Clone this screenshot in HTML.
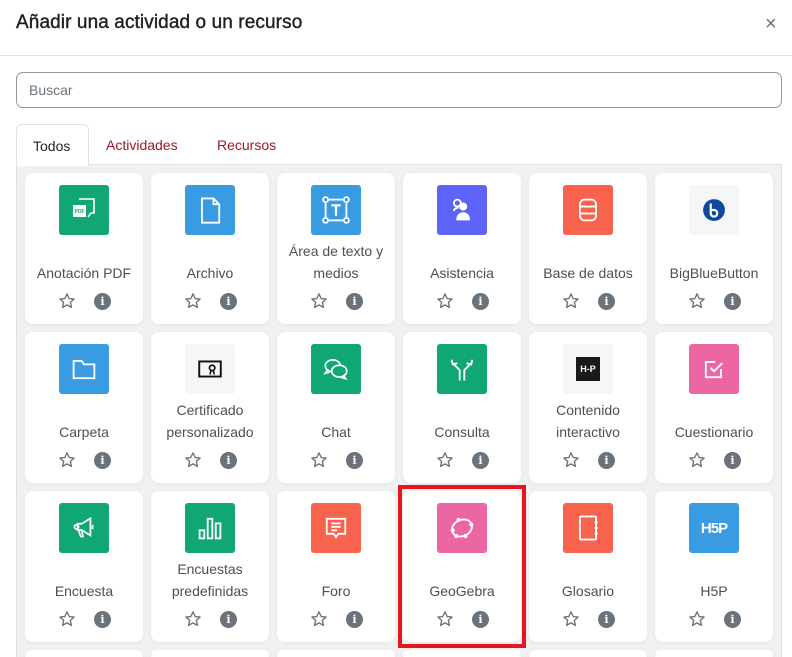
<!DOCTYPE html>
<html><head><meta charset="utf-8"><style>
*{box-sizing:border-box;margin:0;padding:0}
html,body{width:792px;height:657px;overflow:hidden}
body{background:#fff;font-family:"Liberation Sans",sans-serif;color:#495057;position:relative}
.hdr{height:56px;border-bottom:1px solid #dee2e6;position:relative}
.hdr h1{position:absolute;left:16px;top:12px;font-size:19px;font-weight:normal;color:#1d2125;letter-spacing:0.1px;-webkit-text-stroke:0.4px #1d2125}
.x{position:absolute;left:765px;top:13px;font-size:20px;color:#6a737b}
.search{position:absolute;left:16px;top:72px;width:766px;height:36px;border:1px solid #8f959e;border-radius:7px;padding:9px 12px;font-size:14px;color:#6a737b}
.tab{position:absolute;top:137px;font-size:14px;color:#a0172c}
.t0{position:absolute;left:16px;top:124px;width:73px;height:42px;border:1px solid #dee2e6;border-bottom:none;border-radius:6px 6px 0 0;background:#fff;color:#1d2125;font-size:14px;padding:13px 0 0 16px;z-index:2}
.area{position:absolute;left:16px;top:164px;width:766px;height:500px;background:#f0f1f3;border:1px solid #dee2e6}
.c{position:absolute;width:118px;height:151px;background:#fff;border-radius:8px;box-shadow:0 1px 4px rgba(0,0,0,.06);text-align:center}
.ic{position:absolute;left:34px;top:12px;width:50px;height:50px;border-radius:3px;display:flex;align-items:center;justify-content:center}
.lb{position:absolute;left:0;right:0;top:66px;height:45px;display:flex;align-items:flex-end;justify-content:center;font-size:14px;line-height:22px;color:#495057}
.st{position:absolute;left:33px;top:119px}
.inf{position:absolute;left:69px;top:120px;width:17px;height:17px;border-radius:50%;background:#6a737b;color:#fff;font-size:11px;font-weight:bold;line-height:17px;text-align:center;font-family:"DejaVu Serif",serif}
.g{background:#11a676}.b{background:#399be2}.p{background:#5d63f6}.o{background:#f7634d}.k{background:#eb66a2}.w{background:#f5f6f8}
.red{position:absolute;left:398px;top:485px;width:128px;height:163px;border:4px solid #e8141e;z-index:5}
</style></head><body>
<div class="hdr"><h1>Añadir una actividad o un recurso</h1><div class="x">×</div></div>
<div class="search">Buscar</div>
<div class="t0">Todos</div>
<div class="tab" style="left:106px">Actividades</div>
<div class="tab" style="left:217px">Recursos</div>
<div class="area"></div>
<div id="g"></div>
<div class="red"></div>
<script>
const S='<svg class="st" width="18" height="18" viewBox="0 0 24 24"><path d="M12 2.5l2.9 6.2 6.6.7-5 4.5 1.4 6.6L12 17.2l-5.9 3.3 1.4-6.6-5-4.5 6.6-.7z" fill="none" stroke="#6a737b" stroke-width="1.8" stroke-linejoin="round"/></svg><div class="inf">i</div>';
const W='fill="none" stroke="#fff" stroke-width="1.6"';
const I={
pdf:`<svg width="30" height="30" viewBox="0 0 30 30"><path d="M10 4h15v14h-3l-3 4" ${W}/><rect x="4" y="10" width="13" height="12" fill="#fff"/><text x="10.5" y="18" font-size="5" fill="#11a676" text-anchor="middle" font-weight="bold" font-family="Liberation Sans">PDF</text></svg>`,
file:`<svg width="30" height="30" viewBox="0 0 26 26"><path d="M6 3h10l5 5v16H6z M16 3v5h5" ${W}/></svg>`,
text:`<svg width="30" height="30" viewBox="0 0 26 26"><rect x="4" y="4" width="18" height="18" ${W}/><circle cx="4" cy="4" r="2.2" fill="#399be2" stroke="#fff" stroke-width="1.5"/><circle cx="22" cy="4" r="2.2" fill="#399be2" stroke="#fff" stroke-width="1.5"/><circle cx="4" cy="22" r="2.2" fill="#399be2" stroke="#fff" stroke-width="1.5"/><circle cx="22" cy="22" r="2.2" fill="#399be2" stroke="#fff" stroke-width="1.5"/><path d="M9 9h8M13 9v9" stroke="#fff" stroke-width="2"/></svg>`,
att:`<svg width="30" height="30" viewBox="0 0 26 26"><circle cx="9" cy="7" r="3" ${W}/><circle cx="14" cy="10" r="3.5" fill="#fff"/><path d="M8 22c0-5 3-7 6-7s6 2 6 7z" fill="#fff"/><path d="M6 14c0-2 2-3 4-3" ${W}/></svg>`,
db:`<svg width="30" height="30" viewBox="0 0 26 26"><rect x="6" y="4" width="14" height="18" rx="4" ${W}/><path d="M6 10h14M6 16h14" ${W}/></svg>`,
bbb:`<svg width="24" height="24" viewBox="0 0 22 22"><circle cx="11" cy="11" r="10" fill="#0d4a9c"/><path d="M8 5v9a3 3 0 1 0 3-3H8" fill="none" stroke="#fff" stroke-width="2"/></svg>`,
folder:`<svg width="30" height="30" viewBox="0 0 26 26"><path d="M4 6h7l2 3h9v12H4z" ${W}/></svg>`,
cert:`<svg width="28" height="28" viewBox="0 0 26 26"><rect x="3" y="6" width="20" height="14" fill="none" stroke="#111" stroke-width="1.8"/><circle cx="15" cy="12" r="2.5" fill="none" stroke="#111" stroke-width="1.6"/><path d="M14 14l-1 4M16 14l1 4" stroke="#111" stroke-width="1.5"/></svg>`,
chat:`<svg width="30" height="30" viewBox="0 0 28 28"><ellipse cx="11" cy="11" rx="7" ry="5.5" ${W}/><ellipse cx="17" cy="16" rx="7" ry="5.5" fill="#11a676" stroke="#fff" stroke-width="1.6"/><path d="M6 15l-2 3 4-1M21 20l2 3-4-1" ${W}/></svg>`,
choice:`<svg width="30" height="30" viewBox="0 0 26 26"><path d="M11 23V14L5 8M15 23V14l6-6M4 5l1 4 4-1M22 5l-1 4-4-1" ${W}/></svg>`,
h5pk:`<div style="width:24px;height:24px;background:#1a1a1a;color:#fff;font-size:9px;font-weight:bold;line-height:24px">H-P</div>`,
quiz:`<svg width="28" height="28" viewBox="0 0 24 24"><path d="M18 12v7H5V6h8" ${W}/><path d="M9 11l3 3 7-7" ${W}/></svg>`,
survey:`<svg width="30" height="30" viewBox="0 0 28 28"><path d="M8 10h4l8-5v16l-8-5H8z M9 17l2 5h2l-1-5M22 11v4" ${W}/><circle cx="7" cy="13" r="2" ${W}/></svg>`,
bars:`<svg width="30" height="30" viewBox="0 0 26 26"><rect x="4" y="15" width="4" height="7" ${W}/><rect x="11" y="5" width="4" height="17" ${W}/><rect x="18" y="9" width="4" height="13" ${W}/></svg>`,
forum:`<svg width="30" height="30" viewBox="0 0 26 26"><path d="M5 5h16v13h-6l-2 3-2-3H5z" ${W}/><path d="M9 9h8M9 12h8M9 15h5" ${W}/></svg>`,
geo:`<svg width="30" height="30" viewBox="0 0 26 26"><ellipse cx="13" cy="13" rx="9" ry="7" transform="rotate(-25 13 13)" ${W}/><circle cx="5" cy="15" r="1.8" fill="#fff"/><circle cx="10" cy="6" r="1.8" fill="#fff"/><circle cx="21" cy="10" r="1.8" fill="#fff"/><circle cx="16" cy="20" r="1.8" fill="#fff"/><circle cx="8" cy="20" r="1.8" fill="#fff"/></svg>`,
glos:`<svg width="30" height="30" viewBox="0 0 26 26"><rect x="6" y="3" width="14" height="20" rx="1" ${W}/><path d="M20 7v2M20 12v2M20 17v2" stroke="#fff" stroke-width="2.5"/></svg>`,
h5p:`<span style="color:#fff;font-weight:bold;font-size:15px;letter-spacing:-1px">H5P</span>`
};
const D=[
['pdf','g','Anotación PDF'],['file','b','Archivo'],['text','b','Área de texto y medios'],['att','p','Asistencia'],['db','o','Base de datos'],['bbb','w','BigBlueButton'],
['folder','b','Carpeta'],['cert','w','Certificado personalizado'],['chat','g','Chat'],['choice','g','Consulta'],['h5pk','w','Contenido interactivo'],['quiz','k','Cuestionario'],
['survey','g','Encuesta'],['bars','g','Encuestas predefinidas'],['forum','o','Foro'],['geo','k','GeoGebra'],['glos','o','Glosario'],['h5p','b','H5P'],
['','w',''],['','w',''],['','w',''],['','w',''],['','w',''],['','w','']];
let h='';
D.forEach((d,i)=>{const x=25+(i%6)*126,y=173+Math.floor(i/6)*159;
h+=d[0]?`<div class="c" style="left:${x}px;top:${y}px"><div class="ic ${d[1]}">${I[d[0]]}</div><div class="lb"><span>${d[2]}</span></div>${S}</div>`:`<div class="c" style="left:${x}px;top:${y}px;height:10px"></div>`;});
document.getElementById('g').innerHTML=h;
</script>
</body></html>
